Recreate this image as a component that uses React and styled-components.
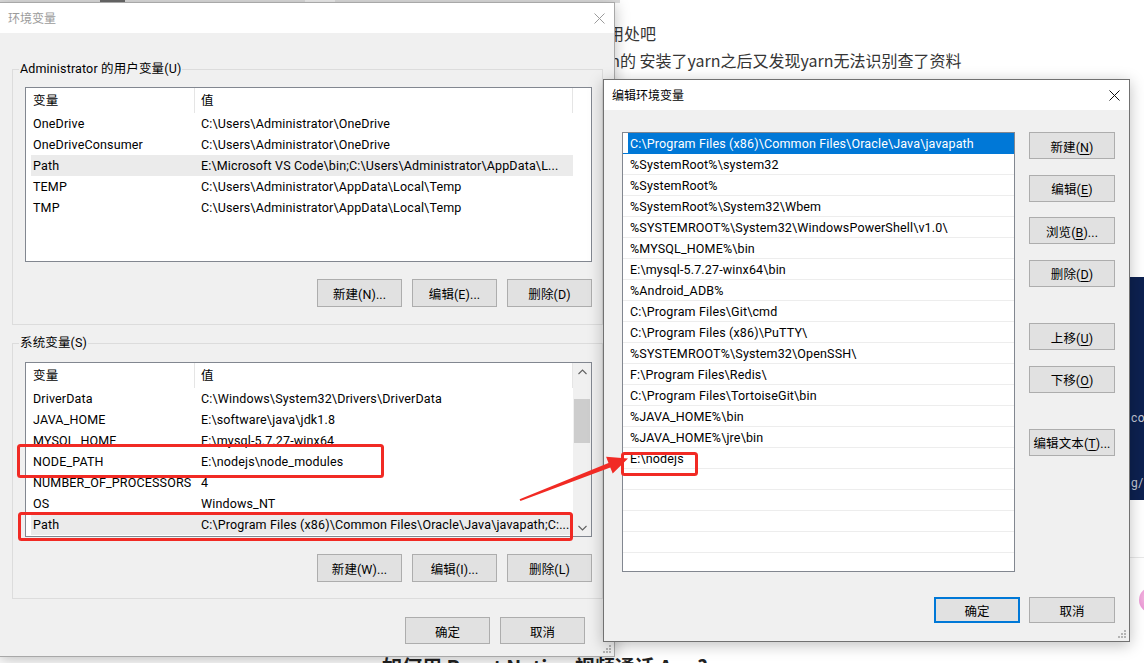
import React from 'react';
import styled, { createGlobalStyle } from 'styled-components';

const UI_FONT = `Roboto, "Noto Sans CJK SC", sans-serif`;
const CJK_FONT = `"Noto Sans CJK SC", "Noto Sans", sans-serif`;

const GlobalStyle = createGlobalStyle`
  * { box-sizing: border-box; }
  html, body { margin: 0; padding: 0; background: #fff; }
  body { width: 1144px; height: 663px; overflow: hidden; font-family: ${UI_FONT}; }
`;

/* ---------- desktop / background page ---------- */
const Desktop = styled.div`
  position: relative;
  width: 1144px;
  height: 663px;
  overflow: hidden;
  background: #fff;
  display: flex;
`;

const Page = styled.main`
  flex: 1;
  display: flex;
  flex-direction: column;
  min-width: 0;
`;

const TopStrip = styled.div`
  width: 620px;
  height: 3px;
  flex: none;
  background: #dcdcdc;
  display: flex;
  gap: 180px;
  padding-left: 100px;
`;

const StripMark = styled.span`
  width: ${p => p.$w}px;
  height: 3px;
  background: ${p => p.$c};
`;

const Article = styled.article`
  flex: none;
  padding: 17px 0 0 560px;
  font-family: ${CJK_FONT};
  font-size: 16px;
  line-height: 27px;
  color: #353535;
`;

const Line = styled.p`
  margin: 0;
  white-space: nowrap;
  text-indent: ${p => p.$indent ?? 0}px;
`;

const BottomHeading = styled.h2`
  flex: none;
  margin: 581px 0 0 0;
  padding-left: 382px;
  font-family: ${CJK_FONT};
  font-size: 20px;
  line-height: 24px;
  font-weight: 700;
  color: #222;
  white-space: nowrap;
`;

const SideRail = styled.aside`
  width: 14px;
  flex: none;
  display: flex;
  flex-direction: column;
`;

const NavyCard = styled.div`
  margin-top: 277px;
  height: 223px;
  background: #0d2150;
  padding: 131px 0 0 1px;
  display: flex;
  flex-direction: column;
  gap: 45px;
  font-family: ${UI_FONT};
  font-size: 12px;
  line-height: 20px;
  letter-spacing: 0.5px;
  color: #c3c8d6;
  white-space: nowrap;
`;

const RailDivider = styled.div`
  margin-top: 57px;
  height: 1px;
  background: #e8e8e8;
  width: 40px;
`;

const Avatar = styled.div`
  margin: 29px 0 0 9px;
  width: 26px;
  height: 26px;
  flex: none;
  border-radius: 50%;
  background: radial-gradient(circle at 40% 40%, #f7c1e3, #e27ccd);
`;

/* ---------- windows ---------- */
const Window = styled.section`
  position: absolute;
  left: ${p => p.$x}px;
  top: ${p => p.$y}px;
  width: ${p => p.$w}px;
  height: ${p => p.$h}px;
  z-index: ${p => p.$z};
  display: flex;
  flex-direction: column;
  background: #f0f0f0;
  border: 1px solid ${p => (p.$active ? '#717171' : '#a8a8a8')};
  box-shadow: 0 3px 14px rgba(0, 0, 0, 0.25);
  font-family: ${UI_FONT};
  font-size: 12.5px;
  letter-spacing: 0.15px;
  color: #000;
`;

const TitleBar = styled.header`
  flex: none;
  height: 30px;
  background: #fff;
  display: flex;
  align-items: center;
  justify-content: space-between;
  padding-left: 8px;
`;

const Title = styled.span`
  font-size: 12px;
  letter-spacing: 0;
  line-height: 18px;
  padding-top: 1px;
  color: ${p => (p.$active ? '#000' : '#9b9b9b')};
`;

const CloseButton = styled.span`
  width: 30px;
  height: 30px;
  display: flex;
  align-items: center;
  justify-content: center;
  color: ${p => (p.$active ? '#111' : '#9b9b9b')};
`;

const CloseIcon = () => (
  <svg width="11" height="11" viewBox="0 0 11 11">
    <path d="M0.5 0.5 L10.5 10.5 M10.5 0.5 L0.5 10.5" stroke="currentColor" strokeWidth="1" fill="none" />
  </svg>
);

const Grip = styled.svg`
  position: absolute;
  right: 2px;
  bottom: 2px;
`;

const ResizeGrip = () => (
  <Grip width="10" height="10" viewBox="0 0 10 10">
    {[[8, 2], [5, 5], [8, 5], [2, 8], [5, 8], [8, 8]].map(([x, y]) => (
      <rect key={`${x}-${y}`} x={x - 1} y={y - 1} width="2" height="2" fill="#b4b4b4" />
    ))}
  </Grip>
);

/* ---------- environment variables dialog ---------- */
const EnvBody = styled.div`
  flex: 1;
  display: flex;
  flex-direction: column;
  padding: 36px 11px 0 12px;
`;

const GroupBox = styled.div`
  position: relative;
  border: 1px solid #dcdcdc;
  margin-top: ${p => p.$mt}px;
  padding: ${p => p.$pt}px 10px ${p => p.$pb}px 12px;
`;

const GroupLabel = styled.span`
  position: absolute;
  top: -9px;
  left: 6px;
  padding: 0 1px;
  background: #f0f0f0;
  line-height: 16px;
  white-space: nowrap;
`;

const ListBox = styled.div`
  height: ${p => p.$h}px;
  border: 1px solid #828790;
  background: #fff;
  display: flex;
  overflow: hidden;
`;

const Table = styled.div`
  flex: 1;
  display: flex;
  flex-direction: column;
  min-width: 0;
`;

const HeaderRow = styled.div`
  display: grid;
  grid-template-columns: 169px 378px;
  height: 25px;
  flex: none;
  overflow: hidden;
`;

const HeaderCell = styled.div`
  line-height: 26px;
  padding-left: 6px;
  border-right: 1px solid #e5e5e5;
  &:first-child { padding-left: 7px; }
`;

const VarRow = styled.div`
  display: grid;
  grid-template-columns: 169px 378px;
  height: 21px;
  flex: none;
  overflow: hidden;
  background: ${p => (p.$selected ? 'linear-gradient(to right, transparent 5px, #ebebeb 5px)' : 'transparent')};
`;

const VarCell = styled.div`
  line-height: 22px;
  padding-left: 6px;
  white-space: nowrap;
  overflow: hidden;
  &:first-child { padding-left: 7px; }
`;

const Gutter = styled.div`
  width: 18px;
  flex: none;
  display: flex;
  flex-direction: column;
  background: ${p => (p.$scroll ? '#f0f0f0' : '#fff')};
`;

const ScrollArrow = styled.div`
  height: 17px;
  flex: none;
  display: flex;
  align-items: center;
  justify-content: center;
`;

const ScrollTrack = styled.div`
  flex: 1;
  display: flex;
  flex-direction: column;
`;

const ScrollThumb = styled.div`
  margin: 19px 1px 0 1px;
  height: 44px;
  background: #cdcdcd;
`;

const Chevron = ({ up }) => (
  <svg width="9" height="6" viewBox="0 0 9 6">
    <path d={up ? 'M0.5 5 L4.5 1 L8.5 5' : 'M0.5 1 L4.5 5 L8.5 1'} stroke="#606060" strokeWidth="1.1" fill="none" />
  </svg>
);

const ButtonRow = styled.div`
  display: flex;
  justify-content: flex-end;
  gap: ${p => p.$gap ?? 10}px;
  margin-top: ${p => p.$mt}px;
  padding-right: ${p => p.$pr ?? 0}px;
`;

const Button = styled.button`
  width: ${p => p.$w ?? 85}px;
  height: ${p => p.$h ?? 28}px;
  margin-top: ${p => p.$mt ?? 0}px;
  flex: none;
  padding: 1px 0 0 0;
  background: #e1e1e1;
  border: ${p => (p.$default ? '2px solid #0078d7' : '1px solid #adadad')};
  font-family: inherit;
  font-size: 12.5px;
  letter-spacing: 0.1px;
  color: #000;
  white-space: nowrap;
  u { text-underline-offset: 2px; }
`;

/* ---------- edit path dialog ---------- */
const EditBody = styled.div`
  flex: 1;
  display: flex;
  flex-direction: column;
  padding: 22px 14px 0 18px;
`;

const EditMain = styled.div`
  display: flex;
  gap: 14px;
`;

const PathList = styled.div`
  width: 393px;
  height: 440px;
  flex: none;
  border: 1px solid #828790;
  background: #fff;
  display: flex;
  flex-direction: column;
  overflow: hidden;
`;

const PathRow = styled.div`
  height: 21px;
  flex: none;
  padding-left: 7px;
  line-height: 22px;
  border-bottom: 1px solid ${p => (p.$selected ? '#0078d7' : '#ededed')};
  white-space: nowrap;
  color: ${p => (p.$selected ? '#fff' : '#000')};
  background: ${p => (p.$selected ? 'linear-gradient(to right, transparent 5px, #0078d7 5px)' : 'transparent')};
`;

const ButtonColumn = styled.div`
  display: flex;
  flex-direction: column;
  gap: 15.5px;
`;

/* ---------- annotations ---------- */
const Annotations = styled.svg`
  position: absolute;
  left: 0;
  top: 0;
  z-index: 5;
  pointer-events: none;
`;

const RED = '#f12a24';

const userVars = [
  ['OneDrive', 'C:\\Users\\Administrator\\OneDrive'],
  ['OneDriveConsumer', 'C:\\Users\\Administrator\\OneDrive'],
  ['Path', 'E:\\Microsoft VS Code\\bin;C:\\Users\\Administrator\\AppData\\L...', true],
  ['TEMP', 'C:\\Users\\Administrator\\AppData\\Local\\Temp'],
  ['TMP', 'C:\\Users\\Administrator\\AppData\\Local\\Temp'],
];

const systemVars = [
  ['DriverData', 'C:\\Windows\\System32\\Drivers\\DriverData'],
  ['JAVA_HOME', 'E:\\software\\java\\jdk1.8'],
  ['MYSQL_HOME', 'E:\\mysql-5.7.27-winx64'],
  ['NODE_PATH', 'E:\\nodejs\\node_modules'],
  ['NUMBER_OF_PROCESSORS', '4'],
  ['OS', 'Windows_NT'],
  ['Path', 'C:\\Program Files (x86)\\Common Files\\Oracle\\Java\\javapath;C:...', true],
];

const pathEntries = [
  'C:\\Program Files (x86)\\Common Files\\Oracle\\Java\\javapath',
  '%SystemRoot%\\system32',
  '%SystemRoot%',
  '%SystemRoot%\\System32\\Wbem',
  '%SYSTEMROOT%\\System32\\WindowsPowerShell\\v1.0\\',
  '%MYSQL_HOME%\\bin',
  'E:\\mysql-5.7.27-winx64\\bin',
  '%Android_ADB%',
  'C:\\Program Files\\Git\\cmd',
  'C:\\Program Files (x86)\\PuTTY\\',
  '%SYSTEMROOT%\\System32\\OpenSSH\\',
  'F:\\Program Files\\Redis\\',
  'C:\\Program Files\\TortoiseGit\\bin',
  '%JAVA_HOME%\\bin',
  '%JAVA_HOME%\\jre\\bin',
  'E:\\nodejs',
  '', '', '', '', '', '',
];

const VarTable = ({ rows, scroll }) => (
  <ListBox $h={175}>
    <Table>
      <HeaderRow>
        <HeaderCell>变量</HeaderCell>
        <HeaderCell>值</HeaderCell>
      </HeaderRow>
      {rows.map(([name, value, selected]) => (
        <VarRow key={name + value} $selected={selected}>
          <VarCell>{name}</VarCell>
          <VarCell>{value}</VarCell>
        </VarRow>
      ))}
    </Table>
    <Gutter $scroll={scroll}>
      {scroll && (
        <>
          <ScrollArrow><Chevron up /></ScrollArrow>
          <ScrollTrack><ScrollThumb /></ScrollTrack>
          <ScrollArrow><Chevron /></ScrollArrow>
        </>
      )}
    </Gutter>
  </ListBox>
);

const EnvDialog = () => (
  <Window $x={-1} $y={2} $w={616} $h={655} $z={1}>
    <TitleBar>
      <Title>环境变量</Title>
      <CloseButton><CloseIcon /></CloseButton>
    </TitleBar>
    <EnvBody>
      <GroupBox $mt={0} $pt={17} $pb={17}>
        <GroupLabel>Administrator 的用户变量(U)</GroupLabel>
        <VarTable rows={userVars} />
        <ButtonRow $mt={17}>
          <Button>新建(N)...</Button>
          <Button>编辑(E)...</Button>
          <Button>删除(D)</Button>
        </ButtonRow>
      </GroupBox>
      <GroupBox $mt={18} $pt={18} $pb={16}>
        <GroupLabel>系统变量(S)</GroupLabel>
        <VarTable rows={systemVars} scroll />
        <ButtonRow $mt={17}>
          <Button>新建(W)...</Button>
          <Button>编辑(I)...</Button>
          <Button>删除(L)</Button>
        </ButtonRow>
      </GroupBox>
      <ButtonRow $mt={18} $pr={18}>
        <Button $h={27}>确定</Button>
        <Button $h={27}>取消</Button>
      </ButtonRow>
    </EnvBody>
    <ResizeGrip />
  </Window>
);

const EditDialog = () => (
  <Window $x={603} $y={79} $w={527} $h={563} $z={2} $active>
    <TitleBar>
      <Title $active>编辑环境变量</Title>
      <CloseButton $active><CloseIcon /></CloseButton>
    </TitleBar>
    <EditBody>
      <EditMain>
        <PathList>
          {pathEntries.map((p, i) => (
            <PathRow key={i} $selected={i === 0}>{p}</PathRow>
          ))}
        </PathList>
        <ButtonColumn>
          <Button $w={86} $h={27}>新建(<u>N</u>)</Button>
          <Button $w={86} $h={27}>编辑(<u>E</u>)</Button>
          <Button $w={86} $h={27}>浏览(<u>B</u>)...</Button>
          <Button $w={86} $h={27}>删除(<u>D</u>)</Button>
          <Button $w={86} $h={27} $mt={21}>上移(<u>U</u>)</Button>
          <Button $w={86} $h={27}>下移(<u>O</u>)</Button>
          <Button $w={86} $h={27} $mt={20.5}>编辑文本(<u>T</u>)...</Button>
        </ButtonColumn>
      </EditMain>
      <ButtonRow $mt={25} $gap={9}>
        <Button $w={86} $h={26} $default>确定</Button>
        <Button $w={86} $h={26}>取消</Button>
      </ButtonRow>
    </EditBody>
    <ResizeGrip />
  </Window>
);

const Markup = () => (
  <Annotations width="1144" height="663" viewBox="0 0 1144 663">
    <rect x="18.5" y="445.5" width="364" height="31" rx="2" fill="none" stroke={RED} strokeWidth="3" />
    <rect x="19.5" y="513.5" width="552" height="26" rx="2" fill="none" stroke={RED} strokeWidth="3" />
    <rect x="622.5" y="453.5" width="74" height="21" rx="2" fill="none" stroke={RED} strokeWidth="3" />
    <polygon
      points="519.6,499.2 608.5,462.9 606.1,456.8 628,458.5 612.7,473.6 610.3,467.5 520.4,500.9"
      fill={RED}
    />
  </Annotations>
);

export default function App() {
  return (
    <>
      <GlobalStyle />
      <Desktop>
        <Page>
          <TopStrip>
            <StripMark $w={25} $c="#6a6a6a" />
            <StripMark $w={30} $c="#eeeeee" />
          </TopStrip>
          <Article>
            <Line>应该没用处吧</Line>
            <Line $indent={11}>用yarn的 安装了yarn之后又发现yarn无法识别查了资料</Line>
          </Article>
          <BottomHeading>如何用 React Native 视频通话 App?</BottomHeading>
        </Page>
        <SideRail>
          <NavyCard>
            <span>co</span>
            <span>g/</span>
          </NavyCard>
          <RailDivider />
          <Avatar />
        </SideRail>
        <EnvDialog />
        <EditDialog />
        <Markup />
      </Desktop>
    </>
  );
}
